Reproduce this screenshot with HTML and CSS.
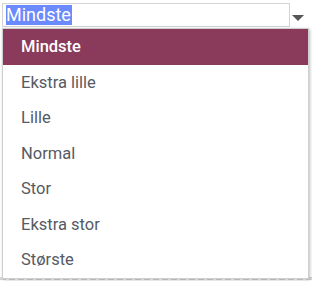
FILE: index.html
```html
<!DOCTYPE html>
<html lang="no">
<head>
<meta charset="utf-8">
<link rel="stylesheet" href="styles.css">
</head>
<body>
<div class="page">
  <div class="field">
    <div class="select"><span class="sel">Mindste</span></div>
    <span class="arrow"></span>
  </div>
  <div class="below"></div>
  <ul class="menu">
    <li class="item active">Mindste</li>
    <li class="item">Ekstra lille</li>
    <li class="item">Lille</li>
    <li class="item">Normal</li>
    <li class="item">Stor</li>
    <li class="item">Ekstra stor</li>
    <li class="item">Største</li>
  </ul>
</div>
</body>
</html>
```
FILE: styles.css
```css
html, body {
  margin: 0;
  padding: 0;
  background: #fff;
}
.page {
  position: relative;
  width: 312px;
  height: 281px;
  overflow: hidden;
  font-family: Roboto, "Liberation Sans", sans-serif;
}
.field {
  display: flex;
  align-items: center;
  padding: 3px 0 0 2px;
}
.select {
  width: 286px;
  height: 22px;
  border: 1px solid #d4d4d4;
  display: flex;
  align-items: center;
}
.sel {
  margin-left: 3px;
  background: #6b8afd;
  color: #fff;
  font-size: 18px;
  line-height: 20px;
  padding: 0 1px 0 0;
}
.arrow {
  margin-left: 2px;
  margin-top: 6px;
  width: 0;
  height: 0;
  border-left: 6px solid transparent;
  border-right: 6px solid transparent;
  border-top: 6px solid #555;
}
.below {
  margin-top: 250px;
  border-top: 3px dashed #d8d8d8;
}
.menu {
  position: absolute;
  left: 2px;
  top: 28px;
  width: 305px;
  margin: 0;
  padding: 0;
  list-style: none;
  background: #fff;
  border: 1px solid #cfcfcf;
  box-shadow: 1px 1px 3px rgba(0,0,0,0.25);
}
.item {
  height: 35.5px;
  line-height: 35.5px;
  padding-left: 18px;
  font-size: 16.5px;
  color: #555a63;
}
.item.active {
  background: #8a3a5b;
  color: #fff;
  font-weight: 500;
}
```
